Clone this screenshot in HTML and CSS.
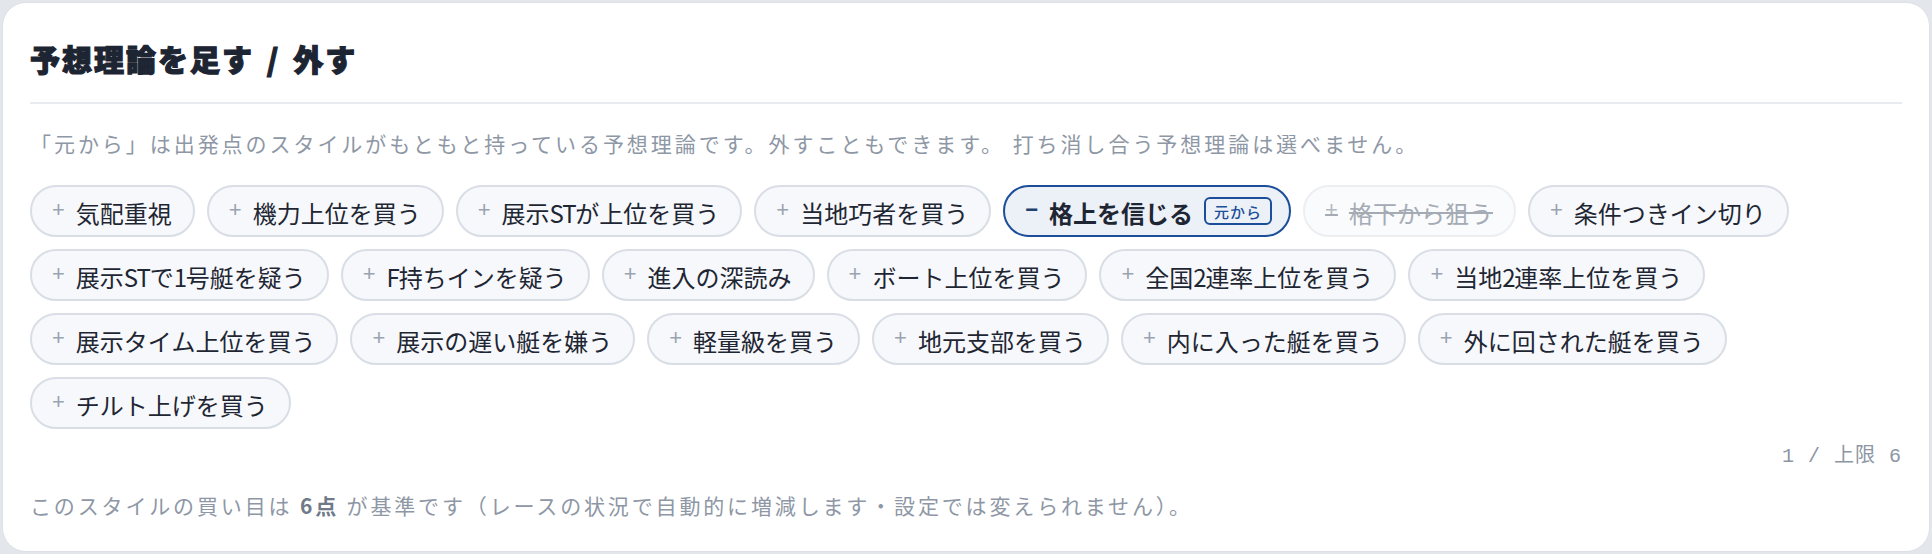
FILE: index.html
```html
<!DOCTYPE html>
<html lang="ja">
<head>
<meta charset="utf-8">
<title>予想理論を足す / 外す</title>
<link rel="stylesheet" href="styles.css">
</head>
<body>
<section class="card">
  <h2 class="title">予想理論を足す / 外す</h2>
  <div class="divider"></div>
  <p class="desc">「元から」は出発点のスタイルがもともと持っている予想理論です。外すこともできます。 打ち消し合う予想理論は選べません。</p>
  <div class="chips">
    <div class="chip"><span class="lbl"><span class="sign">+</span>気配重視</span></div>
    <div class="chip"><span class="lbl"><span class="sign">+</span>機力上位を買う</span></div>
    <div class="chip"><span class="lbl"><span class="sign">+</span>展示<span class="lat">ST</span>が上位を買う</span></div>
    <div class="chip"><span class="lbl"><span class="sign">+</span>当地巧者を買う</span></div>
    <div class="chip chip-on"><span class="lbl"><span class="sign">−</span>格上を信じる</span><span class="badge">元から</span></div>
    <div class="chip chip-off"><span class="lbl"><span class="sign">+</span>格下から狙う</span></div>
    <div class="chip"><span class="lbl"><span class="sign">+</span>条件つきイン切り</span></div>
    <div class="chip"><span class="lbl"><span class="sign">+</span>展示<span class="lat">ST</span>で<span class="lat">1</span>号艇を疑う</span></div>
    <div class="chip"><span class="lbl"><span class="sign">+</span><span class="lat">F</span>持ちインを疑う</span></div>
    <div class="chip"><span class="lbl"><span class="sign">+</span>進入の深読み</span></div>
    <div class="chip"><span class="lbl"><span class="sign">+</span>ボート上位を買う</span></div>
    <div class="chip"><span class="lbl"><span class="sign">+</span>全国<span class="lat">2</span>連率上位を買う</span></div>
    <div class="chip"><span class="lbl"><span class="sign">+</span>当地<span class="lat">2</span>連率上位を買う</span></div>
    <div class="chip"><span class="lbl"><span class="sign">+</span>展示タイム上位を買う</span></div>
    <div class="chip"><span class="lbl"><span class="sign">+</span>展示の遅い艇を嫌う</span></div>
    <div class="chip"><span class="lbl"><span class="sign">+</span>軽量級を買う</span></div>
    <div class="chip"><span class="lbl"><span class="sign">+</span>地元支部を買う</span></div>
    <div class="chip"><span class="lbl"><span class="sign">+</span>内に入った艇を買う</span></div>
    <div class="chip"><span class="lbl"><span class="sign">+</span>外に回された艇を買う</span></div>
    <div class="chip"><span class="lbl"><span class="sign">+</span>チルト上げを買う</span></div>
  </div>
  <div class="counter">1 / 上限 6</div>
  <p class="foot">このスタイルの買い目は <b>6点</b> が基準です（レースの状況で自動的に増減します・設定では変えられません）。</p>
</section>
</body>
</html>
```

FILE: styles.css
```css
html, body {
  margin: 0;
}
body {
  background: #e3e7ec;
  padding: 2px;
  font-family: "Noto Sans CJK JP", "Noto Sans", sans-serif;
}
.card {
  box-sizing: border-box;
  height: 550px;
  background: #ffffff;
  border: 1px solid #dde1e7;
  border-radius: 24px;
  padding: 35px 27px 31px;
}
.title {
  margin: 0;
  font-size: 30px;
  line-height: 40px;
  font-weight: 900;
  letter-spacing: 2px;
  word-spacing: 4px;
  color: #1d2533;
  -webkit-text-stroke: 1.2px #1d2533;
}
.divider {
  height: 2px;
  background: #e8ebef;
  margin-top: 24px;
}
.desc {
  margin: 24px 0 0;
  font-size: 21px;
  line-height: 30px;
  letter-spacing: 2.95px;
  color: #8e97a5;
  white-space: nowrap;
}
.chips {
  display: flex;
  flex-wrap: wrap;
  gap: 12px;
  margin-top: 27px;
}
.chip {
  box-sizing: border-box;
  height: 52px;
  display: flex;
  align-items: center;
  padding: 0 21px 0 20px;
  border: 2px solid #d9dee6;
  border-radius: 26px;
  background: #f6f8fb;
  font-size: 24px;
  color: #1f2633;
  white-space: nowrap;
}
.lbl {
  line-height: 30px;
}
.lat {
  letter-spacing: -1.2px;
}
.sign {
  font-family: "Liberation Sans", sans-serif;
  font-size: 22px;
  margin-right: 11px;
  color: #9aa3b0;
  vertical-align: 0.26em;
}
.chip-on {
  border-color: #1b4d98;
  background: #ecf0f7;
  padding-right: 17px;
}
.chip-on .lbl {
  font-weight: 700;
  color: #1f2633;
}
.chip-on .sign {
  font-weight: 700;
  color: #22406e;
}
.badge {
  box-sizing: border-box;
  height: 28px;
  display: flex;
  align-items: center;
  margin-left: 11px;
  padding: 0 8px;
  border: 2px solid #1b4d98;
  border-radius: 6px;
  font-size: 15px;
  font-weight: 500;
  letter-spacing: 1px;
  color: #1b4d98;
}
.chip-off {
  border-color: #eceef2;
  background: #fafbfd;
  color: #a5abb4;
}
.chip-off .lbl {
  text-decoration: line-through;
  text-decoration-color: #a5abb4;
}
.chip-off .sign {
  color: #b3b8c0;
}
.counter {
  margin-top: 16px;
  text-align: right;
  font-family: "Liberation Mono", "Noto Sans CJK JP", monospace;
  font-size: 20px;
  line-height: 24px;
  letter-spacing: 1px;
  color: #8c96a5;
}
.foot {
  margin: 21px 0 0;
  font-size: 21px;
  line-height: 30px;
  letter-spacing: 2.85px;
  color: #8e97a5;
  white-space: nowrap;
}
.foot b {
  font-weight: 700;
  color: #6f7987;
}
```
